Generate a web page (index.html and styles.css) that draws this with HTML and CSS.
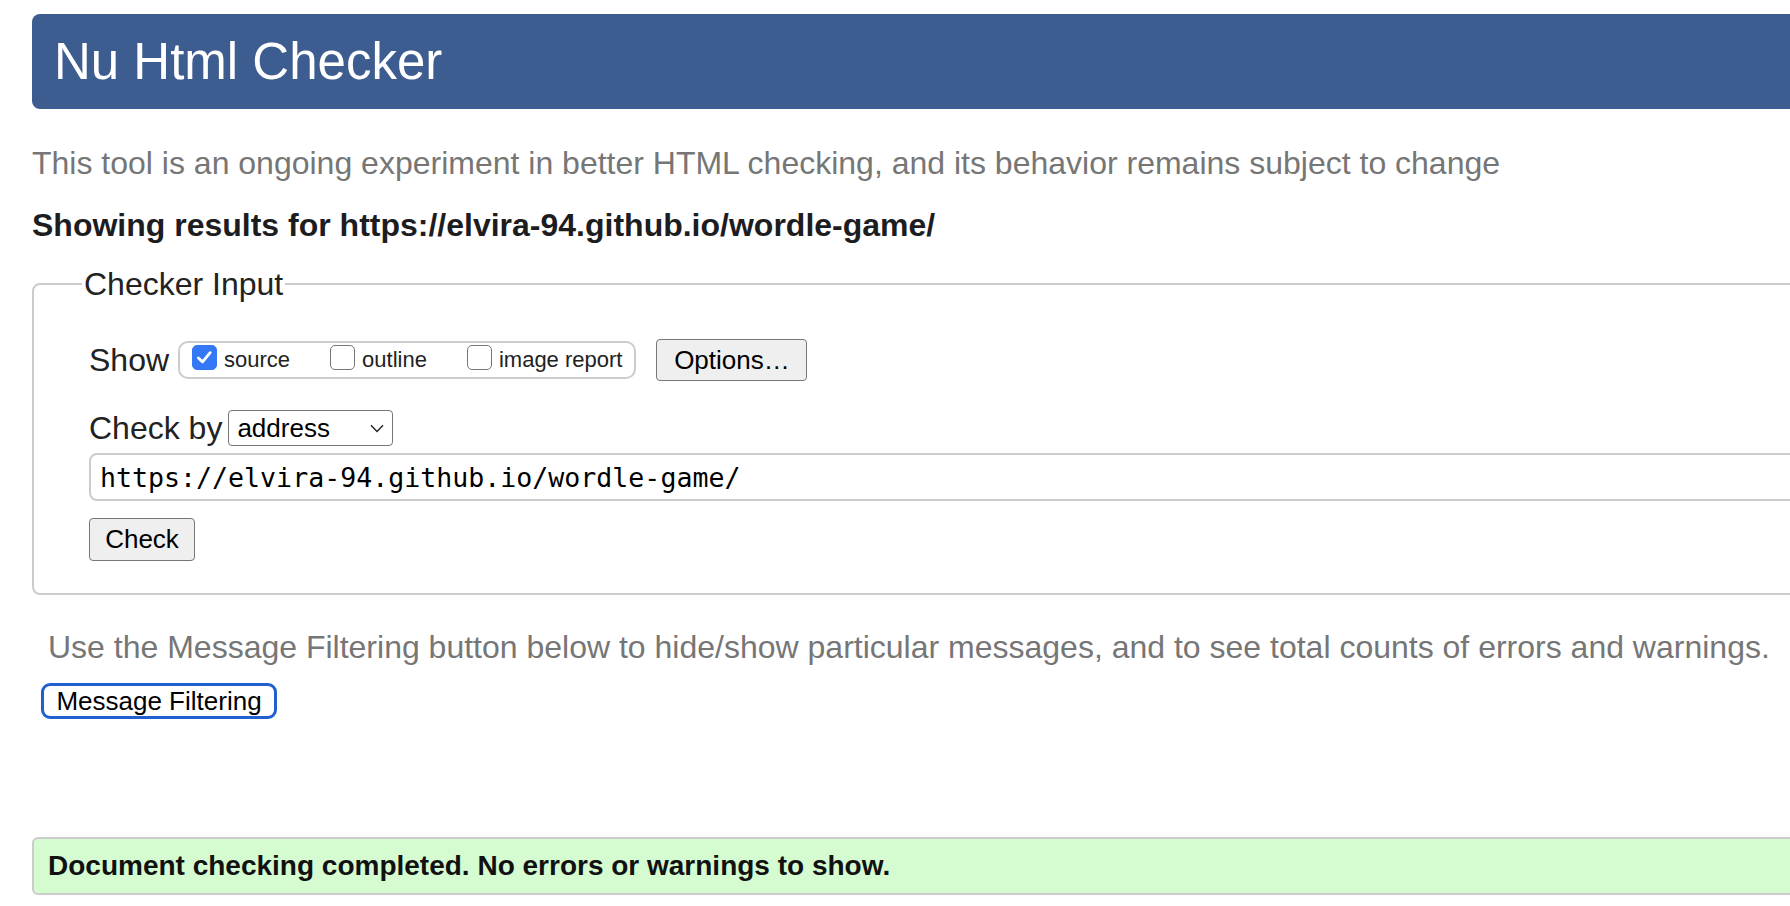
FILE: index.html
```html
<!DOCTYPE html>
<html lang="en">
<head>
<meta charset="utf-8">
<title>Nu Html Checker</title>
<link rel="stylesheet" href="styles.css">
</head>
<body>
<div class="page">
  <header class="banner"><h1>Nu Html Checker</h1></header>
  <p class="intro">This tool is an ongoing experiment in better HTML checking, and its behavior remains subject to change</p>
  <p class="showing">Showing results for https://elvira-94.github.io/wordle-game/</p>
  <fieldset class="checker">
    <legend>Checker Input</legend>
    <div class="row show-row">
      <span class="lbl">Show</span>
      <div class="opts">
        <label class="opt"><span class="cb on"><svg viewBox="0 0 24 24" width="21" height="21"><path d="M5 12.5 L9.8 17 L18.5 6.5" fill="none" stroke="#fff" stroke-width="3.2" stroke-linecap="round" stroke-linejoin="round"/></svg></span>source</label>
        <label class="opt"><span class="cb"></span>outline</label>
        <label class="opt"><span class="cb"></span>image report</label>
      </div>
      <button class="btn opt-btn">Options…</button>
    </div>
    <div class="row by-row">
      <span class="lbl">Check by</span>
      <div class="select"><span>address</span><svg viewBox="0 0 14 9" width="14" height="9"><path d="M1 1.2 L7 7.5 L13 1.2" fill="none" stroke="#222" stroke-width="1.4"/></svg></div>
    </div>
    <div class="url">https://elvira-94.github.io/wordle-game/</div>
    <button class="btn check-btn">Check</button>
  </fieldset>
  <p class="filter-note">Use the Message Filtering button below to hide/show particular messages, and to see total counts of errors and warnings.</p>
  <button class="filter-btn">Message Filtering</button>
  <div class="success">Document checking completed. No errors or warnings to show.</div>
</div>
</body>
</html>
```

FILE: styles.css
```css
html, body {
  margin: 0;
  overflow: hidden;
  background: #fff;
}
body {
  font-family: "Liberation Sans", Arial, sans-serif;
  color: #222;
}
.page {
  width: 2200px;
  padding: 14px 0 0 32px;
}
.banner {
  height: 95px;
  background: #3d5d90;
  border-radius: 8px;
  display: flex;
  align-items: center;
  padding-left: 22px;
}
.banner h1 {
  margin: 0;
  color: #fff;
  font-weight: 400;
  font-size: 51px;
  line-height: 1;
}
.intro {
  margin: 35px 0 0;
  font-size: 32px;
  line-height: 38px;
  color: #767676;
}
.showing {
  margin: 24px 0 0;
  font-size: 32px;
  line-height: 38px;
  font-weight: 700;
  color: #1d1d1f;
}
.checker {
  margin: 21px 0 0;
  padding: 0 0 32px 55px;
  border: 2px solid #ccc;
  border-radius: 8px;
  min-width: 0;
}
.checker legend {
  font-size: 32px;
  line-height: 38px;
  padding: 0 2px;
  margin-left: -7px;
  color: #222;
}
.row {
  display: flex;
  align-items: center;
}
.lbl {
  font-size: 32px;
  line-height: 38px;
  color: #222;
}
.show-row {
  margin-top: 36px;
  height: 42px;
}
.opts {
  margin-left: 9px;
  height: 38px;
  box-sizing: border-box;
  border: 2px solid #ccc;
  border-radius: 10px;
  display: flex;
  align-items: center;
  padding: 0 12px;
  gap: 40px;
  font-size: 22px;
  line-height: 26px;
  color: #222;
}
.opt {
  display: flex;
  align-items: center;
  gap: 7px;
}
.cb {
  width: 25px;
  height: 25px;
  box-sizing: border-box;
  border-radius: 5px;
  border: 1.5px solid #767676;
  background: #fff;
  margin-top: -6px;
  display: flex;
  align-items: center;
  justify-content: center;
}
.cb.on {
  background: #3478f6;
  border-color: #3478f6;
}
.btn {
  font-family: inherit;
  background: #efefef;
  border: 1.5px solid #767676;
  border-radius: 4px;
  color: #000;
  padding: 0;
}
.opt-btn {
  margin-left: 20px;
  width: 151px;
  height: 42px;
  font-size: 26px;
}
.by-row {
  margin-top: 28px;
  height: 38px;
}
.select {
  margin-left: 6px;
  width: 165px;
  height: 36px;
  box-sizing: border-box;
  border: 1.5px solid #767676;
  border-radius: 4px;
  display: flex;
  align-items: center;
  justify-content: space-between;
  padding: 0 8px 0 8px;
  font-size: 26px;
  color: #000;
}
.url {
  margin-top: 6px;
  height: 48px;
  box-sizing: border-box;
  border: 2px solid #ccc;
  border-radius: 8px;
  font-family: "DejaVu Sans Mono", monospace;
  font-size: 26.6px;
  padding-left: 9px;
  display: flex;
  align-items: center;
  color: #000;
}
.check-btn {
  display: block;
  margin-top: 17px;
  width: 106px;
  height: 43px;
  font-size: 26px;
}
.filter-note {
  margin: 33px 0 0 16px;
  font-size: 32px;
  line-height: 38px;
  color: #767676;
}
.filter-btn {
  display: block;
  margin: 17px 0 0 9px;
  width: 236px;
  height: 36px;
  padding: 0;
  border: 3px solid #2060d0;
  border-radius: 9px;
  background: #fff;
  font-family: inherit;
  font-size: 26px;
  color: #000;
}
.success {
  margin-top: 118px;
  height: 58px;
  box-sizing: border-box;
  background: #d5fbd1;
  border: 2px solid #ccc;
  border-radius: 6px;
  padding-left: 14px;
  display: flex;
  align-items: center;
  font-size: 28px;
  font-weight: 700;
  color: #111;
}
```
